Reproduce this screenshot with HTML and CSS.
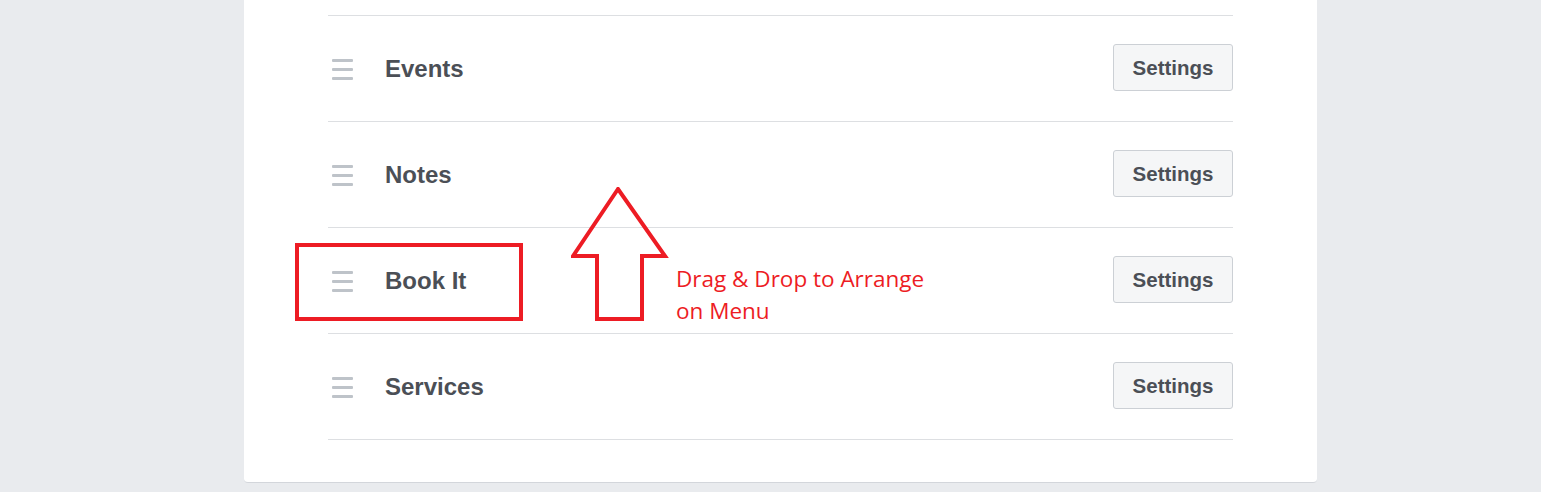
FILE: index.html
```html
<!DOCTYPE html>
<html lang="en">
  <head>
    <meta charset="UTF-8" />
    <title>Tabs</title>
    <link rel="stylesheet" href="styles.css">
  </head>
  <body>
    <div class="card">
      <ul class="tab-list">
        <li class="tab-row">
          <span class="handle"><i></i><i></i><i></i></span>
          <span class="tab-name">Events</span>
          <button class="settings">Settings</button>
        </li>
        <li class="tab-row">
          <span class="handle"><i></i><i></i><i></i></span>
          <span class="tab-name">Notes</span>
          <button class="settings">Settings</button>
        </li>
        <li class="tab-row">
          <span class="handle"><i></i><i></i><i></i></span>
          <span class="tab-name">Book It</span>
          <button class="settings">Settings</button>
        </li>
        <li class="tab-row">
          <span class="handle"><i></i><i></i><i></i></span>
          <span class="tab-name">Services</span>
          <button class="settings">Settings</button>
        </li>
      </ul>

      <!-- annotation layer -->
      <div class="note-box"></div>
      <svg class="note-arrow" width="100" height="136" viewBox="0 0 100 136">
        <polygon points="47,2 2,69 26,69 26,132 71,132 71,69 94,69"
          fill="none" stroke="#ed1c24" stroke-width="4" stroke-linejoin="miter" />
      </svg>
      <div class="note-text">Drag &amp; Drop to Arrange<br />on Menu</div>
    </div>
  </body>
</html>
```

FILE: styles.css
```css
* {
  margin: 0;
  padding: 0;
  box-sizing: border-box;
}

body {
  background-color: #e9ebee;
  font-family: "Liberation Sans", Arial, sans-serif;
  color: #4b4f56;
}

.card {
  position: relative;
  width: 1073px;
  margin-left: 244px;
  padding: 15px 84px 42px;
  background: #fff;
  border-radius: 0 0 4px 4px;
  border-bottom: 1px solid #d3d6db;
}

.tab-list {
  list-style: none;
  border-bottom: 1px solid #dddfe2;
}

.tab-row {
  display: flex;
  align-items: center;
  height: 106px;
  border-top: 1px solid #dddfe2;
  padding-left: 4px;
}

/* drag handle */
.handle {
  display: flex;
  flex-direction: column;
  gap: 6px;
  width: 21px;
  margin-right: 32px;
  margin-top: 2px;
}

.handle i {
  display: block;
  height: 3px;
  border-radius: 1px;
  background: #bec3c9;
}

.tab-name {
  flex: 1;
  font-size: 24px;
  font-weight: bold;
}

.settings {
  width: 120px;
  height: 47px;
  margin-top: -2px;
  background: #f5f6f7;
  border: 1px solid #ccd0d5;
  border-radius: 3px;
  font-family: "Liberation Sans", Arial, sans-serif;
  font-size: 20.5px;
  font-weight: bold;
  color: #4b4f56;
  cursor: pointer;
}

/* red annotations */
.note-box {
  position: absolute;
  left: 51px;
  top: 243px;
  width: 228px;
  height: 78px;
  border: 4px solid #ed1c24;
}

.note-arrow {
  position: absolute;
  left: 327px;
  top: 187px;
}

.note-text {
  position: absolute;
  left: 432px;
  top: 263px;
  font-family: "Open Sans", sans-serif;
  font-size: 22.5px;
  line-height: 32px;
  color: #ed1c24;
}
```
